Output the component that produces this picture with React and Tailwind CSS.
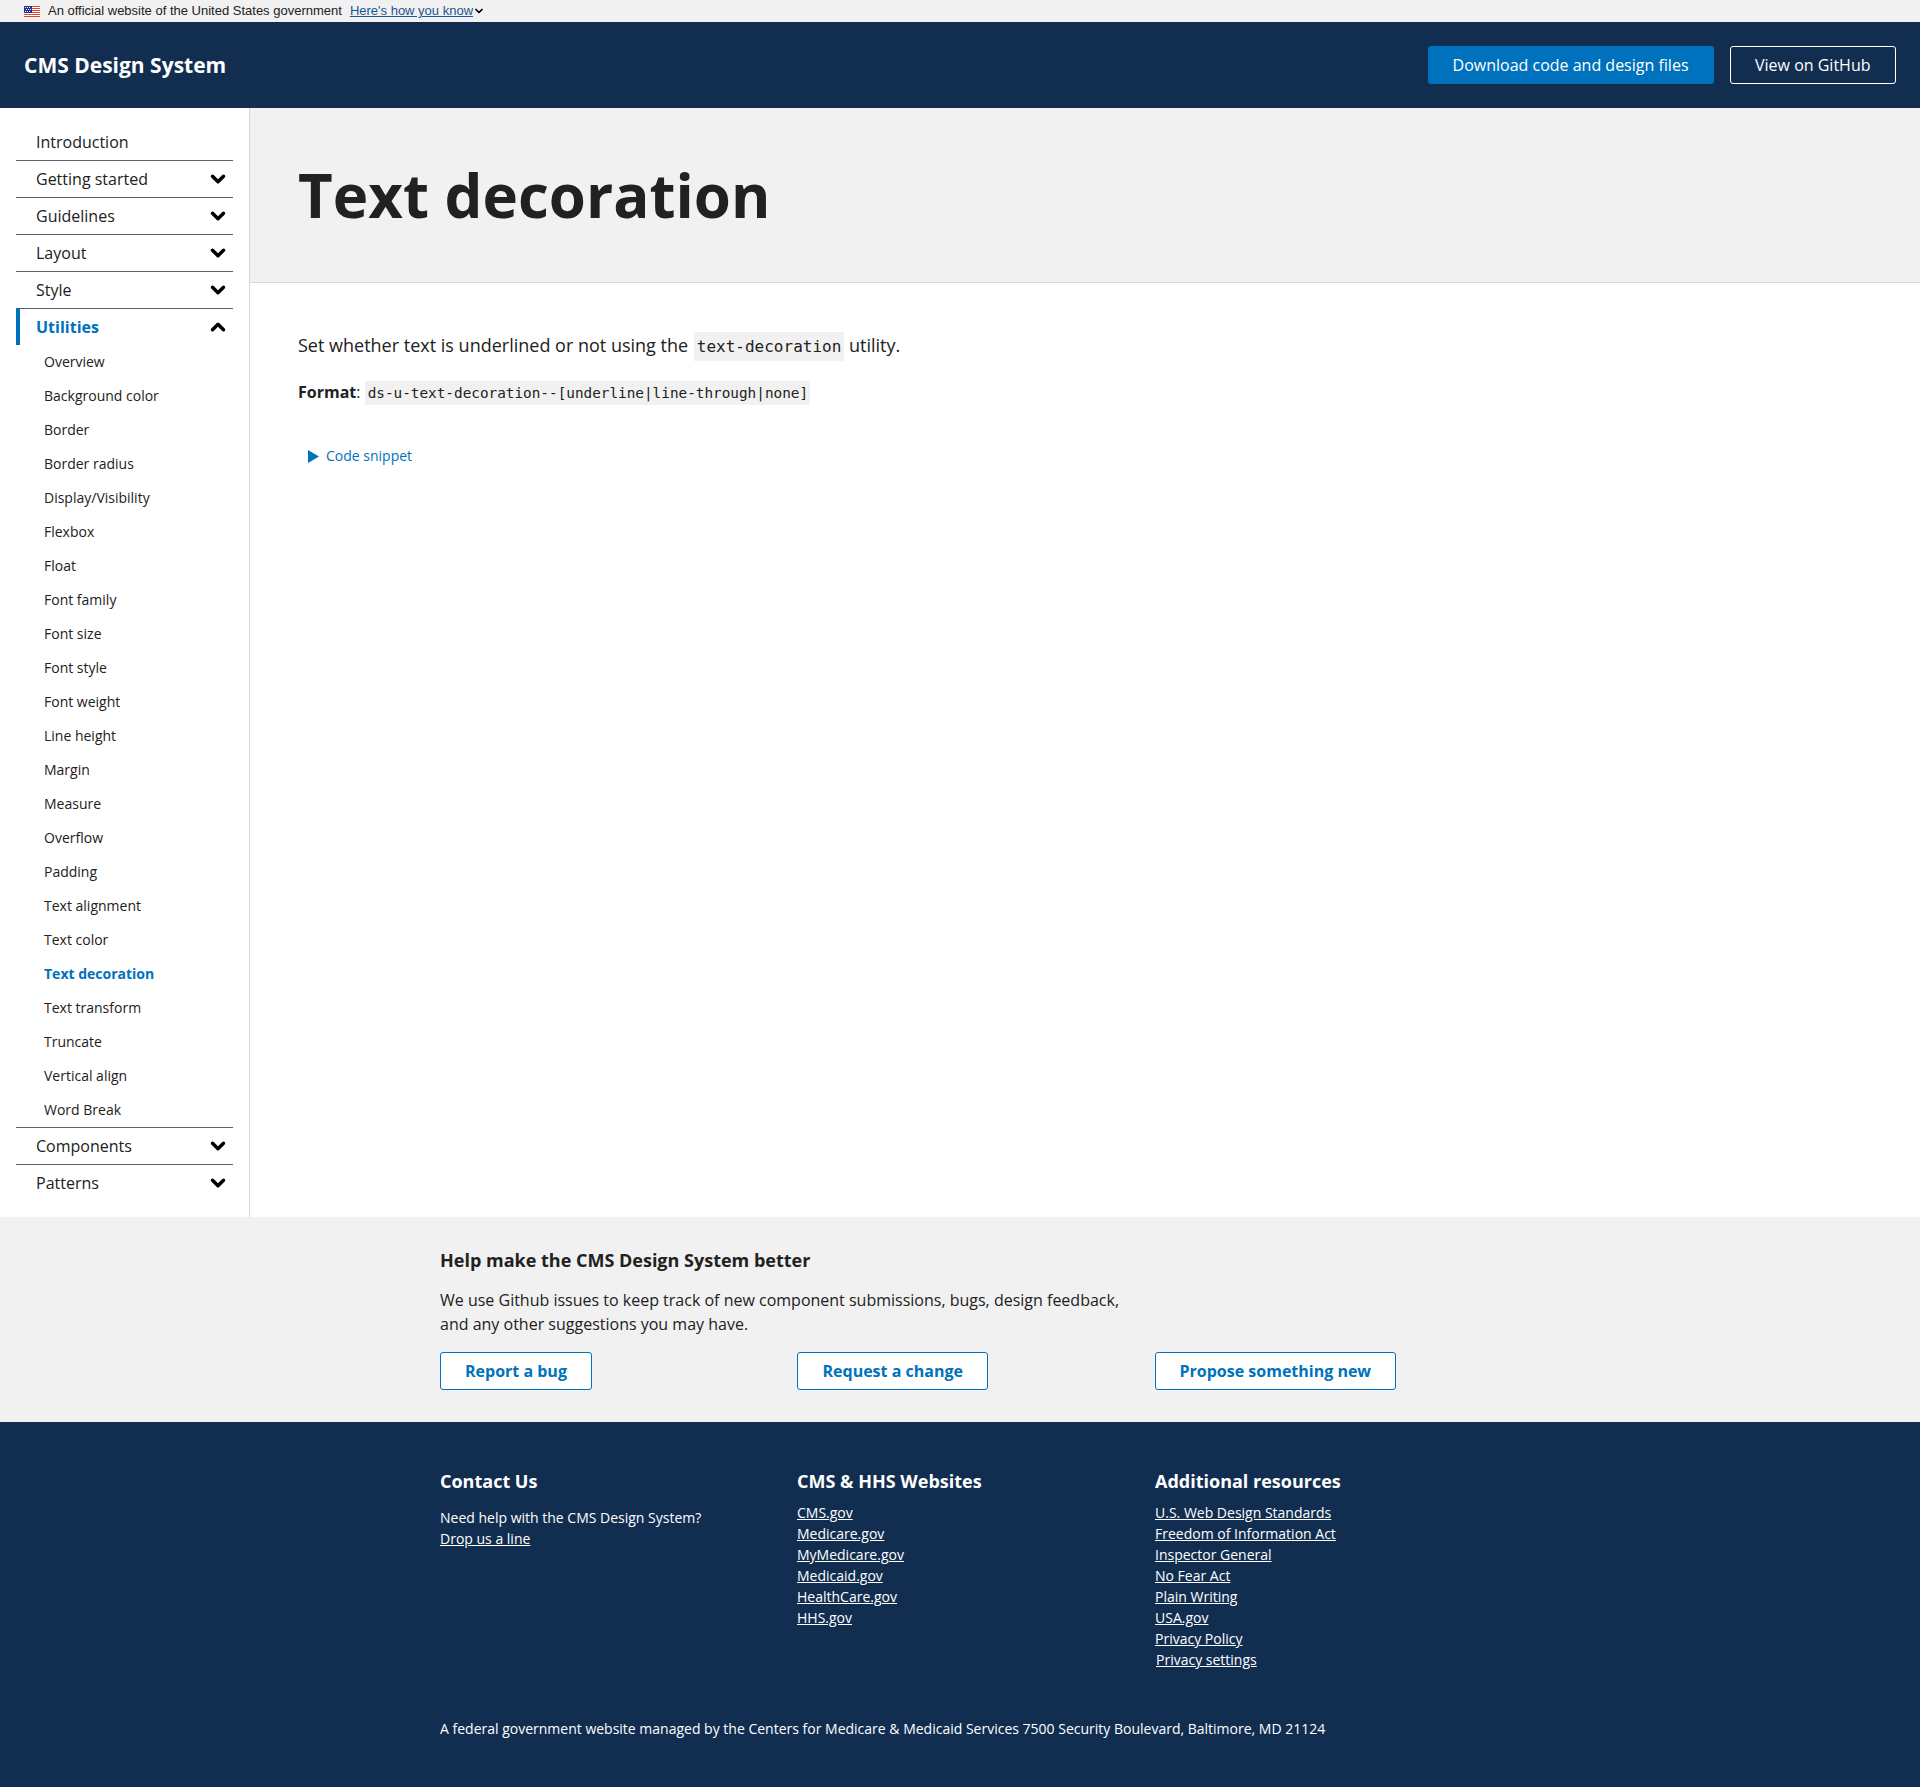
import React from "react";
import { ChevronDown, ChevronUp } from "lucide-react";

const topBefore = ["Getting started", "Guidelines", "Layout", "Style"];

const utilities = [
  "Overview",
  "Background color",
  "Border",
  "Border radius",
  "Display/Visibility",
  "Flexbox",
  "Float",
  "Font family",
  "Font size",
  "Font style",
  "Font weight",
  "Line height",
  "Margin",
  "Measure",
  "Overflow",
  "Padding",
  "Text alignment",
  "Text color",
  "Text decoration",
  "Text transform",
  "Truncate",
  "Vertical align",
  "Word Break",
];

const cmsLinks = ["CMS.gov", "Medicare.gov", "MyMedicare.gov", "Medicaid.gov", "HealthCare.gov", "HHS.gov"];

const resources = [
  "U.S. Web Design Standards",
  "Freedom of Information Act",
  "Inspector General",
  "No Fear Act",
  "Plain Writing",
  "USA.gov",
  "Privacy Policy",
];

const Flag = () => (
  <svg width="16" height="11" viewBox="0 0 16 11" className="shrink-0">
    <rect width="16" height="11" fill="#ffffff" />
    <rect width="16" height="1" y="0" fill="#e0452f" />
    <rect width="16" height="1" y="2" fill="#e0452f" />
    <rect width="16" height="1" y="4" fill="#e0452f" />
    <rect width="16" height="1" y="6" fill="#e0452f" />
    <rect width="16" height="1" y="8" fill="#e0452f" />
    <rect width="16" height="1" y="10" fill="#e0452f" />
    <rect width="8" height="7" fill="#2a2f8f" />
    <path d="M1 1h1v1H1zM3 1h1v1H3zM5 1h1v1H5zM2 3h1v1H2zM4 3h1v1H4zM6 3h1v1H6zM1 5h1v1H1zM3 5h1v1H3zM5 5h1v1H5z" fill="#ffffff" />
  </svg>
);

const NavRow = ({ label, border = true, open, active, icon = true }) => (
  <div
    className={`flex h-[37px] items-center justify-between pl-5 pr-1 ${border ? "border-b border-[#5a5f6e]" : ""}`}
  >
    <span className={active ? "font-bold text-[#0071bc]" : "text-[#212121]"}>{label}</span>
    {icon &&
      (open ? (
        <ChevronUp size={22} strokeWidth={3.8} className="text-black" />
      ) : (
        <ChevronDown size={22} strokeWidth={3.8} className="text-black" />
      ))}
  </div>
);

const Sidebar = () => (
  <aside className="w-[250px] shrink-0 border-r border-[#d6d7d9] pl-4 pr-4 pt-[16px]">
    <NavRow label="Introduction" icon={false} />
    {topBefore.map((label) => (
      <NavRow key={label} label={label} />
    ))}
    <div className="-mt-px border-l-4 border-[#0071bc]">
      <div className="-ml-1">
        <NavRow label="Utilities" border={false} open active />
      </div>
    </div>
    <ul className="border-b border-[#5a5f6e] text-sm">
      {utilities.map((item) => (
        <li
          key={item}
          className={`flex h-[34px] items-center pl-7 ${item === "Text decoration" ? "font-bold text-[#0071bc]" : "text-[#212121]"}`}
        >
          {item}
        </li>
      ))}
    </ul>
    <NavRow label="Components" />
    <div className="-mt-px">
      <NavRow label="Patterns" border={false} />
    </div>
  </aside>
);

const Code = ({ className, children }) => (
  <code className={`bg-[#f1f1f1] font-['DejaVu_Sans_Mono',monospace] text-[#212121] ${className}`}>{children}</code>
);

const Content = () => (
  <main className="flex-1">
    <div className="h-[175px] border-b border-[#d6d7d9] bg-[#f1f1f1] pl-[48px] pt-[48px]">
      <h1 className="text-[60px] leading-[78px] font-bold text-[#212121]">Text decoration</h1>
    </div>
    <div className="pl-[48px] pt-[47px]">
      <p className="text-lg leading-[30px] text-[#212121]">
        Set whether text is underlined or not using the{" "}
        <Code className="ml-px px-[3px] py-[5px] text-base">text-decoration</Code> utility.
      </p>
      <p className="mt-[17px] text-base leading-[30px] text-[#212121]">
        <strong>Format</strong>:{" "}
        <Code className="py-[4px] pl-[3px] pr-[2px] text-[14.35px]">ds-u-text-decoration--[underline|line-through|none]</Code>
      </p>
      <div className="mt-[38px] flex items-center pl-[10px] text-sm text-[#0071bc]">
        <svg width="11" height="13" viewBox="0 0 11 13" className="mr-[7px]">
          <path d="M0 0 L11 6.5 L0 13 Z" fill="#0071bc" />
        </svg>
        Code snippet
      </div>
    </div>
  </main>
);

const OutlineBtn = ({ className, children }) => (
  <button className={`h-[38px] rounded-[3px] border border-[#0071bc] bg-white text-base font-bold text-[#0071bc] ${className}`}>
    {children}
  </button>
);

const FooterLinks = ({ title, links, children }) => (
  <div>
    <h4 className="text-lg leading-[24px] font-bold">{title}</h4>
    <ul className="mt-[9px] text-sm leading-[21px]">
      {links.map((l) => (
        <li key={l}>
          <a className="underline">{l}</a>
        </li>
      ))}
      {children}
    </ul>
  </div>
);

export default function App() {
  return (
    <div className="font-['Open_Sans',sans-serif] text-base">
      <div className="flex h-[22px] items-center gap-2 bg-[#f1f1f1] pl-6 font-['Liberation_Sans',sans-serif] text-[13px] text-[#212121]">
        <Flag />
        <span>An official website of the United States government</span>
        <span className="flex items-center">
          <a className="text-[#205493] underline">Here's how you know</a>
          <ChevronDown size={12} strokeWidth={3.5} className="text-black" />
        </span>
      </div>

      <header className="flex h-[86px] items-center justify-between bg-[#112e51] pl-6 pr-6 text-white">
        <div className="pt-px text-[21px] font-bold">CMS Design System</div>
        <div className="flex gap-4">
          <button className="h-[38px] rounded-[3px] bg-[#0071bc] px-[25px] text-base">
            Download code and design files
          </button>
          <button className="h-[38px] rounded-[3px] border border-white px-[24.5px] text-base">View on GitHub</button>
        </div>
      </header>

      <div className="flex h-[1109px]">
        <Sidebar />
        <Content />
      </div>

      <section className="h-[205px] bg-[#f1f1f1] pt-[31px] text-[#212121]">
        <div className="mx-auto w-[1040px]">
          <h3 className="text-lg leading-[24px] font-bold">Help make the CMS Design System better</h3>
          <p className="mt-[16px] w-[700px] leading-[24px]">
            We use Github issues to keep track of new component submissions, bugs, design feedback, and any other
            suggestions you may have.
          </p>
          <div className="mt-[16px] grid grid-cols-[357px_358px_325px] items-start justify-items-start">
            <OutlineBtn className="px-6">Report a bug</OutlineBtn>
            <OutlineBtn className="px-[24.5px]">Request a change</OutlineBtn>
            <OutlineBtn className="px-[23.5px]">Propose something new</OutlineBtn>
          </div>
        </div>
      </section>

      <footer className="h-[365px] bg-[#112e51] pt-[47px] text-white">
        <div className="mx-auto w-[1040px]">
          <div className="grid h-[249px] grid-cols-[357px_358px_325px]">
            <div>
              <h4 className="text-lg leading-[24px] font-bold">Contact Us</h4>
              <p className="mt-[14px] text-sm leading-[21px]">
                Need help with the CMS Design System?
                <br />
                <a className="underline">Drop us a line</a>
              </p>
            </div>
            <FooterLinks title="CMS & HHS Websites" links={cmsLinks} />
            <FooterLinks title="Additional resources" links={resources}>
              <li className="pl-px">
                <a className="underline">Privacy settings</a>
              </li>
            </FooterLinks>
          </div>
          <p className="text-sm leading-[21px]">
            A federal government website managed by the Centers for Medicare &amp; Medicaid Services 7500 Security
            Boulevard, Baltimore, MD 21124
          </p>
        </div>
      </footer>
    </div>
  );
}
